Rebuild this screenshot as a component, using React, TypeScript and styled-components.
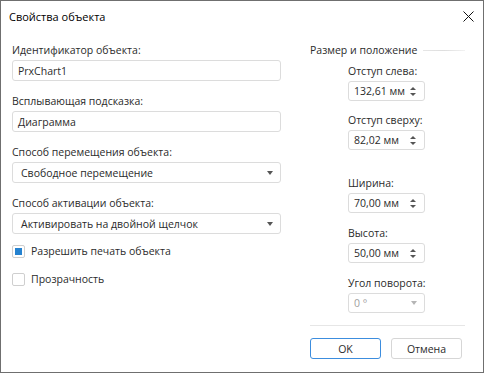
import React from "react";
import styled, { createGlobalStyle } from "styled-components";

const GlobalStyle = createGlobalStyle`
  html, body {
    margin: 0;
    padding: 0;
    background: #ffffff;
  }
  * {
    box-sizing: border-box;
  }
`;

const Window = styled.div`
  width: 484px;
  height: 373px;
  border: 1px solid #6f6f6f;
  background: #ffffff;
  font-family: "Open Sans", "Noto Sans", sans-serif;
  font-size: 10.5px;
  color: #2b2b2b;
  display: flex;
  flex-direction: column;
`;

const TitleBar = styled.div`
  height: 31px;
  display: flex;
  align-items: center;
  justify-content: space-between;
  padding: 0 9px 0 8px;
`;

const Title = styled.span`
  font-size: 11px;
  color: #000000;
`;

const CloseButton = styled.button`
  border: none;
  background: transparent;
  padding: 0;
  width: 12px;
  height: 12px;
  display: flex;
  align-items: center;
  justify-content: center;
`;

const Body = styled.div`
  flex: 1;
  display: grid;
  grid-template-columns: 269px 155px;
  column-gap: 29px;
  padding: 10px 17px 0 11px;
`;

const Column = styled.div`
  display: flex;
  flex-direction: column;
  align-items: stretch;
`;

const Field = styled.div<{ $gap?: number }>`
  display: flex;
  flex-direction: column;
  margin-bottom: ${({ $gap }) => $gap ?? 12}px;
`;

const Label = styled.label`
  line-height: 16px;
  height: 16px;
  margin-bottom: 2px;
  white-space: nowrap;
`;

const Box = styled.div<{ $disabled?: boolean; $height?: number }>`
  height: ${({ $height }) => $height ?? 21}px;
  border: 1px solid #dcdcdc;
  border-radius: 3px;
  display: flex;
  align-items: center;
  justify-content: space-between;
  color: ${({ $disabled }) => ($disabled ? "#a0a0a0" : "#2b2b2b")};
  background: #ffffff;
`;

const InputText = styled.span<{ $pad: number }>`
  padding-left: ${({ $pad }) => $pad}px;
  white-space: nowrap;
`;

const Caret = styled.span<{ $disabled?: boolean }>`
  width: 0;
  height: 0;
  margin-right: 7px;
  border-left: 3.5px solid transparent;
  border-right: 3.5px solid transparent;
  border-top: 4px solid ${({ $disabled }) => ($disabled ? "#b5b5b5" : "#555555")};
`;

const CheckRow = styled.div`
  display: flex;
  align-items: center;
  height: 16px;
  margin-bottom: 12px;
  gap: 6px;
`;

const CheckBox = styled.span<{ $checked?: boolean }>`
  width: 13px;
  height: 13px;
  border: 1px solid #cfcfcf;
  border-radius: 2px;
  display: flex;
  align-items: center;
  justify-content: center;
  &::after {
    content: "";
    display: ${({ $checked }) => ($checked ? "block" : "none")};
    width: 7px;
    height: 7px;
    background: #2582d0;
  }
`;

const GroupHeader = styled.div`
  display: flex;
  align-items: center;
  height: 16px;
  margin-bottom: 5px;
`;

const HeaderLine = styled.span`
  flex: 1;
  height: 1px;
  margin-left: 6px;
  background: linear-gradient(to right, #e6e6e6, #dedede 50%, #f2f2f2);
`;

const SpinField = styled.div<{ $gap: number }>`
  display: flex;
  flex-direction: column;
  width: 77px;
  margin-left: 38px;
  margin-bottom: ${({ $gap }) => $gap}px;
`;

const SpinArrows = styled.span`
  display: flex;
  flex-direction: column;
  gap: 3px;
  margin-right: 8px;
`;

const ArrowUp = styled.span`
  width: 0;
  height: 0;
  border-left: 3px solid transparent;
  border-right: 3px solid transparent;
  border-bottom: 3px solid #555555;
`;

const ArrowDown = styled.span`
  width: 0;
  height: 0;
  border-left: 3px solid transparent;
  border-right: 3px solid transparent;
  border-top: 3px solid #555555;
`;

const Separator = styled.div`
  height: 1px;
  background: #e6e6e6;
  margin: 0 0 12px 0;
`;

const Buttons = styled.div`
  display: flex;
  gap: 10px;
`;

const Button = styled.button<{ $primary?: boolean }>`
  width: 71px;
  height: 21px;
  border: 1px solid ${({ $primary }) => ($primary ? "#3c8dde" : "#d6d6d6")};
  border-radius: 3px;
  background: #ffffff;
  font-family: inherit;
  font-size: 10.5px;
  color: #2b2b2b;
  padding: 0;
`;

type Spin = { label: string; value: string; gap: number };

const spins: Spin[] = [
  { label: "Отступ слева:", value: "132,61 мм", gap: 11 },
  { label: "Отступ сверху:", value: "82,02 мм", gap: 25 },
  { label: "Ширина:", value: "70,00 мм", gap: 12 },
  { label: "Высота:", value: "50,00 мм", gap: 12 },
];

export default function App() {
  return (
    <>
      <GlobalStyle />
      <Window>
        <TitleBar>
          <Title>Свойства объекта</Title>
          <CloseButton aria-label="Закрыть">
            <svg width="11" height="11" viewBox="0 0 11 11">
              <path d="M0.5 0.5 L10.5 10.5 M10.5 0.5 L0.5 10.5" stroke="#111" strokeWidth="1" />
            </svg>
          </CloseButton>
        </TitleBar>
        <Body>
          <Column>
            <Field>
              <Label>Идентификатор объекта:</Label>
              <Box>
                <InputText $pad={5}>PrxChart1</InputText>
              </Box>
            </Field>
            <Field>
              <Label>Всплывающая подсказка:</Label>
              <Box>
                <InputText $pad={5}>Диаграмма</InputText>
              </Box>
            </Field>
            <Field>
              <Label>Способ перемещения объекта:</Label>
              <Box>
                <InputText $pad={8}>Свободное перемещение</InputText>
                <Caret />
              </Box>
            </Field>
            <Field $gap={9}>
              <Label>Способ активации объекта:</Label>
              <Box>
                <InputText $pad={8}>Активировать на двойной щелчок</InputText>
                <Caret />
              </Box>
            </Field>
            <CheckRow>
              <CheckBox $checked />
              <span>Разрешить печать объекта</span>
            </CheckRow>
            <CheckRow>
              <CheckBox />
              <span>Прозрачность</span>
            </CheckRow>
          </Column>
          <Column>
            <GroupHeader>
              <span>Размер и положение</span>
              <HeaderLine />
            </GroupHeader>
            {spins.map((s) => (
              <SpinField key={s.label} $gap={s.gap}>
                <Label>{s.label}</Label>
                <Box $height={20}>
                  <InputText $pad={5}>{s.value}</InputText>
                  <SpinArrows>
                    <ArrowUp />
                    <ArrowDown />
                  </SpinArrows>
                </Box>
              </SpinField>
            ))}
            <SpinField $gap={12}>
              <Label>Угол поворота:</Label>
              <Box $height={20} $disabled>
                <InputText $pad={5}>0 °</InputText>
                <Caret $disabled />
              </Box>
            </SpinField>
            <Separator />
            <Buttons>
              <Button $primary>OK</Button>
              <Button>Отмена</Button>
            </Buttons>
          </Column>
        </Body>
      </Window>
    </>
  );
}
